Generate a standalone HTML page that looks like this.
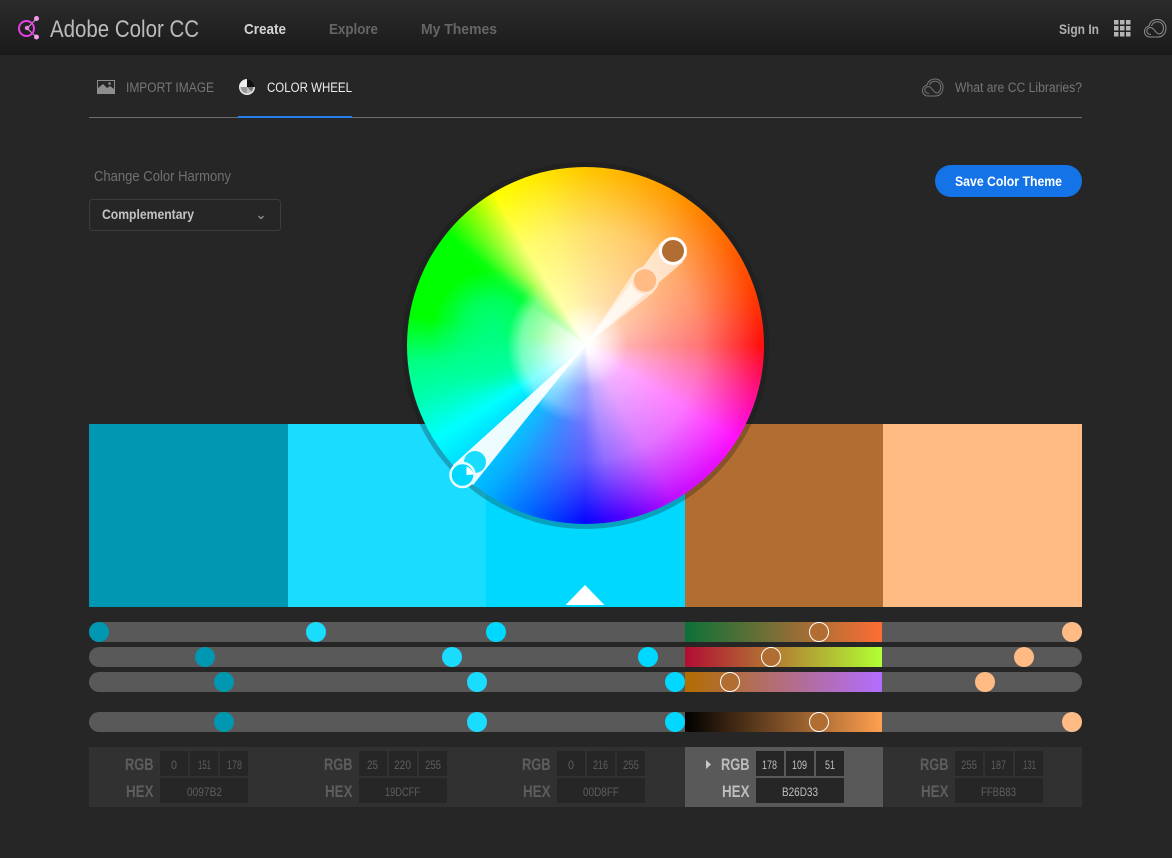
<!DOCTYPE html>
<html><head><meta charset="utf-8"><style>
html,body{margin:0;padding:0;background:#262626;width:1172px;height:858px;overflow:hidden}
div{position:absolute}
svg{position:absolute;left:0;top:0}
text{font-family:"Liberation Sans",sans-serif}
.w{-webkit-mask-image:conic-gradient(from 0deg,#000 0deg,#000 170deg,transparent 222deg,transparent 305deg,#000 328deg,#000 360deg);mask-image:conic-gradient(from 0deg,#000 0deg,#000 170deg,transparent 222deg,transparent 305deg,#000 328deg,#000 360deg)}
.v{-webkit-mask-image:conic-gradient(from 0deg,transparent 0deg,transparent 170deg,#000 222deg,#000 305deg,transparent 328deg,transparent 360deg);mask-image:conic-gradient(from 0deg,transparent 0deg,transparent 170deg,#000 222deg,#000 305deg,transparent 328deg,transparent 360deg)}
</style></head><body>
<div style="left:0;top:0;width:1172px;height:55px;background:linear-gradient(#2b2b2b,#1a1a1a)"></div>

<!-- swatches -->
<div style="left:89px;top:424px;width:199px;height:183px;background:#0097B2"></div>
<div style="left:288px;top:424px;width:198px;height:183px;background:#19DCFF"></div>
<div style="left:486px;top:424px;width:199px;height:183px;background:#00D8FF"></div>
<div style="left:685px;top:424px;width:198px;height:183px;background:#B26D33"></div>
<div style="left:883px;top:424px;width:199px;height:183px;background:#FFBB83"></div>

<!-- tracks -->
<div style="left:89px;top:622px;width:993px;height:20px;border-radius:10px;background:#595959"></div>
<div style="left:89px;top:647px;width:993px;height:20px;border-radius:10px;background:#595959"></div>
<div style="left:89px;top:672px;width:993px;height:20px;border-radius:10px;background:#595959"></div>
<div style="left:89px;top:712px;width:993px;height:20px;border-radius:10px;background:#595959"></div>
<div style="left:685px;top:622px;width:197px;height:20px;background:linear-gradient(90deg,#0c7038,#ff6d33)"></div>
<div style="left:685px;top:647px;width:197px;height:20px;background:linear-gradient(90deg,#b20d33,#b2ff33)"></div>
<div style="left:685px;top:672px;width:197px;height:20px;background:linear-gradient(90deg,#b26d00,#b26dff)"></div>
<div style="left:685px;top:712px;width:197px;height:20px;background:linear-gradient(90deg,#000,#ffa04f)"></div>

<!-- value panel -->
<div style="left:89px;top:747px;width:993px;height:60px;background:#313131"></div>
<div style="left:685px;top:747px;width:198px;height:60px;background:#595959"></div>

<!-- wheel -->
<div style="left:402px;top:162px;width:367px;height:367px;border-radius:50%;background:rgba(20,20,20,.28)"></div>
<div style="left:407px;top:167px;width:357px;height:357px;border-radius:50%;background:
radial-gradient(circle 62px at 24% 46%,rgba(0,255,150,.85) 0,rgba(0,255,150,.6) 50%,rgba(0,255,150,0) 100%),
conic-gradient(from 0deg,#ffc800 0deg,#ff9a00 30deg,#ff7000 50deg,#ff4000 72deg,#ff1010 90deg,#ff1080 104deg,#ff10ff 122deg,#c010ff 150deg,#5000ff 168deg,#0808ff 180deg,#0060ff 197deg,#00a8ff 212deg,#00e0ff 228deg,#00ffff 238deg,#00ffb0 252deg,#00ff80 265deg,#00ff00 280deg,#00ff00 309deg,#ffff00 329deg,#ffe800 345deg,#ffc800 360deg)"></div>
<div class="w" style="left:407px;top:167px;width:357px;height:357px;border-radius:50%;background:radial-gradient(circle closest-side at 50% 50%,rgba(255,255,255,1) 0,rgba(255,255,255,.86) 8%,rgba(255,255,255,.68) 22%,rgba(255,255,255,.57) 40%,rgba(255,255,255,.42) 65%,rgba(255,255,255,.17) 85%,rgba(255,255,255,0) 98%)"></div>
<div class="v" style="left:407px;top:167px;width:357px;height:357px;border-radius:50%;background:radial-gradient(circle closest-side at 50% 50%,rgba(255,255,255,1) 0,rgba(255,255,255,.9) 8%,rgba(255,255,255,.72) 22%,rgba(255,255,255,.46) 36%,rgba(255,255,255,0) 44%)"></div>
<div style="left:407px;top:167px;width:357px;height:357px;border-radius:50%;background:radial-gradient(circle closest-side at 50% 50%,rgba(255,255,255,.95) 0,rgba(255,255,255,.55) 7%,rgba(255,255,255,.25) 15%,rgba(255,255,255,0) 24%)"></div>

<svg width="1172" height="858" viewBox="0 0 1172 858">
  <!-- wheel beams and handles -->
  <polygon points="585.5,345 662,241 683,262" fill="#fff" fill-opacity=".62"/>
  <polygon points="585.5,345 634,272 654,292" fill="#fff" fill-opacity=".55"/>
  <polygon points="585.5,345 453,465 473,485" fill="#fff" fill-opacity=".93"/>
  <circle cx="645" cy="280.500" r="12.500" fill="#FFBB83" stroke="#ffe6d2" stroke-width="2.500"/>
  <circle cx="673" cy="251" r="12.500" fill="#B26D33" stroke="#fff" stroke-width="3"/>
  <circle cx="475" cy="462" r="11" fill="#19DCFF"/>
  <circle cx="462.500" cy="475" r="12" fill="#00D8FF" stroke="#e8fbff" stroke-width="2.500"/>
  <path d="M466.500 466.500a10 10 0 0 1 7 8l-7 .5z" fill="#fff"/>

  <!-- triangle -->
  <polygon points="585,585 604.500,605 565.500,605" fill="#fff"/>

  <!-- slider thumbs -->
  <g fill="#0097B2"><circle cx="99" cy="632" r="10"/><circle cx="205" cy="657" r="10"/><circle cx="224" cy="682" r="10"/><circle cx="224" cy="722" r="10"/></g>
  <g fill="#19DCFF"><circle cx="316" cy="632" r="10"/><circle cx="452" cy="657" r="10"/><circle cx="477" cy="682" r="10"/><circle cx="477" cy="722" r="10"/></g>
  <g fill="#00D8FF"><circle cx="496" cy="632" r="10"/><circle cx="648" cy="657" r="10"/><circle cx="675" cy="682" r="10"/><circle cx="675" cy="722" r="10"/></g>
  <g fill="#B26D33" stroke="#fff" stroke-width="1"><circle cx="819" cy="632" r="9.500"/><circle cx="771" cy="657" r="9.500"/><circle cx="730" cy="682" r="9.500"/><circle cx="819" cy="722" r="9.500"/></g>
  <g fill="#FFBB83"><circle cx="1072" cy="632" r="10"/><circle cx="1024" cy="657" r="10"/><circle cx="985" cy="682" r="10"/><circle cx="1072" cy="722" r="10"/></g>

  <!-- logo -->
  <path d="M27 28.500L36.500 18.500M27 28.500L36.500 37" stroke="#d9a0d6" stroke-width="1" fill="none"/>
  <circle cx="26.500" cy="28.500" r="7.500" stroke-width="2" stroke="#e63fe6" fill="none"/>
  <circle cx="27" cy="28" r="2.200" fill="#f07ae8"/>
  <circle cx="36.500" cy="18.500" r="2.500" fill="#f29ceb"/>
  <circle cx="36.500" cy="37" r="2.500" fill="#f29ceb"/>

  <!-- header text -->
  <text x="50" y="37" font-size="24" fill="#bbbbbb" textLength="149" lengthAdjust="spacingAndGlyphs">Adobe Color CC</text>
  <text x="244" y="34" font-size="15" font-weight="700" fill="#d4d4d4" textLength="42" lengthAdjust="spacingAndGlyphs">Create</text>
  <text x="329" y="34" font-size="15" font-weight="700" fill="#666" textLength="49" lengthAdjust="spacingAndGlyphs">Explore</text>
  <text x="421" y="34" font-size="15" font-weight="700" fill="#666" textLength="76" lengthAdjust="spacingAndGlyphs">My Themes</text>
  <text x="1059" y="34" font-size="14" font-weight="700" fill="#b0b0b0" textLength="40" lengthAdjust="spacingAndGlyphs">Sign In</text>
  <g fill="#b4b4b4">
    <rect x="1114" y="20" width="4.500" height="4.500"/><rect x="1120" y="20" width="4.500" height="4.500"/><rect x="1126" y="20" width="4.500" height="4.500"/>
    <rect x="1114" y="26" width="4.500" height="4.500"/><rect x="1120" y="26" width="4.500" height="4.500"/><rect x="1126" y="26" width="4.500" height="4.500"/>
    <rect x="1114" y="32" width="4.500" height="4.500"/><rect x="1120" y="32" width="4.500" height="4.500"/><rect x="1126" y="32" width="4.500" height="4.500"/>
  </g>
  <g fill="none" stroke="#8e8e8e" stroke-width="1">
    <path d="M1150 37C1146.500 37 1144.500 34.500 1144.500 31.500C1144.500 28.500 1146.500 26.500 1149 26C1150 22 1153 19.500 1157.500 19.500C1162.500 19.500 1166 23.500 1166 28C1166 33 1163 37 1158 37Z"/>
    <path d="M1151 34.500C1148.500 34.500 1146.800 33 1146.800 31C1146.800 29 1148.300 27.500 1150.500 27.500C1154 27.500 1156 34 1159 34C1161.500 34 1163.500 31.500 1163.500 28C1163.500 24.500 1161 21.800 1157.500 21.800C1154.500 21.800 1152.500 23.500 1151.500 26"/>
  </g>

  <!-- tabs -->
  <rect x="97" y="80" width="18" height="14" fill="#8d8d8d"/>
  <path d="M98 81h16v8l-4-3-3 2-4-4-5 4z" fill="#262626"/>
  <circle cx="109.500" cy="83.500" r="1.300" fill="#8d8d8d"/>
  <text x="126" y="92" font-size="13.500" fill="#767676" textLength="88" lengthAdjust="spacingAndGlyphs">IMPORT IMAGE</text>
  <circle cx="247" cy="87" r="8" fill="#eee"/>
  <path d="M247 87V79a8 8 0 0 1 8 8z" fill="#111"/>
  <path d="M247 87h6.500a6.500 6.500 0 0 1-2 4.700z" fill="#777"/>
  <path d="M247 87l4.500 4.700a6.500 6.500 0 0 1-4.500 1.800z" fill="#bbb"/>
  <path d="M247 87v6.500a6.500 6.500 0 0 1-6.500-6.500z" fill="#999"/>
  <text x="267" y="92" font-size="13.500" fill="#ededed" textLength="85" lengthAdjust="spacingAndGlyphs">COLOR WHEEL</text>
  <g fill="none" stroke="#757575" stroke-width="1">
    <path d="M928 96C924.500 96 922.500 93.500 922.500 90.500C922.500 87.500 924.500 85.500 927 85C928 81.500 931 79 935 79C939.800 79 943 82.800 943 87C943 92 940 96 935.500 96Z"/>
    <path d="M929 93.500C926.500 93.500 924.800 92 924.800 90C924.800 88 926.300 86.500 928.500 86.500C932 86.500 933.500 93 936.500 93C939 93 940.700 90.500 940.700 87C940.700 83.700 938.300 81.200 935 81.200C932.300 81.200 930.300 82.800 929.500 85"/>
  </g>
  <text x="955" y="92" font-size="13.500" fill="#767676" textLength="127" lengthAdjust="spacingAndGlyphs">What are CC Libraries?</text>
  <rect x="89" y="117" width="993" height="1" fill="#6e6e6e"/>
  <rect x="238" y="116" width="114" height="2" fill="#2680eb"/>

  <!-- harmony -->
  <text x="94" y="181" font-size="14.500" fill="#707070" textLength="137" lengthAdjust="spacingAndGlyphs">Change Color Harmony</text>
  <rect x="89.500" y="199.500" width="191" height="31" rx="3" fill="none" stroke="#3d3d3d"/>
  <text x="102" y="219" font-size="13.500" font-weight="700" fill="#c4c4c4" textLength="92" lengthAdjust="spacingAndGlyphs">Complementary</text>
  <path d="M258.500 216l2.500 2.500 2.500-2.500" fill="none" stroke="#aaa" stroke-width="1"/>

  <!-- save -->
  <rect x="935" y="165" width="147" height="32" rx="16" fill="#1473e6"/>
  <text x="955" y="186" font-size="13.500" font-weight="700" fill="#fff" textLength="107" lengthAdjust="spacingAndGlyphs">Save Color Theme</text>

  <!-- value boxes -->
  <g fill="#262626">
    <rect x="160" y="751" width="28" height="25"/><rect x="190" y="751" width="28" height="25"/><rect x="220" y="751" width="28" height="25"/><rect x="160" y="778" width="88" height="25"/>
    <rect x="359" y="751" width="28" height="25"/><rect x="389" y="751" width="28" height="25"/><rect x="419" y="751" width="28" height="25"/><rect x="359" y="778" width="88" height="25"/>
    <rect x="557" y="751" width="28" height="25"/><rect x="587" y="751" width="28" height="25"/><rect x="617" y="751" width="28" height="25"/><rect x="557" y="778" width="88" height="25"/>
    <rect x="756" y="751" width="28" height="25"/><rect x="786" y="751" width="28" height="25"/><rect x="816" y="751" width="28" height="25"/><rect x="756" y="778" width="88" height="25"/>
    <rect x="955" y="751" width="28" height="25"/><rect x="985" y="751" width="28" height="25"/><rect x="1015" y="751" width="28" height="25"/><rect x="955" y="778" width="88" height="25"/>
  </g>

  <g font-size="16.500" font-weight="700" fill="#5e5e5e">
    <text x="125" y="770" textLength="28.500" lengthAdjust="spacingAndGlyphs">RGB</text><text x="126" y="797" textLength="27.500" lengthAdjust="spacingAndGlyphs">HEX</text>
    <text x="324" y="770" textLength="28.500" lengthAdjust="spacingAndGlyphs">RGB</text><text x="325" y="797" textLength="27.500" lengthAdjust="spacingAndGlyphs">HEX</text>
    <text x="522" y="770" textLength="28.500" lengthAdjust="spacingAndGlyphs">RGB</text><text x="523" y="797" textLength="27.500" lengthAdjust="spacingAndGlyphs">HEX</text>
    <text x="721" y="770" textLength="28.500" lengthAdjust="spacingAndGlyphs" fill="#bdbdbd">RGB</text><text x="722" y="797" textLength="27.500" lengthAdjust="spacingAndGlyphs" fill="#bdbdbd">HEX</text>
    <text x="920" y="770" textLength="28.500" lengthAdjust="spacingAndGlyphs">RGB</text><text x="921" y="797" textLength="27.500" lengthAdjust="spacingAndGlyphs">HEX</text>
  </g>
  <polygon points="706,760 711,764.500 706,769" fill="#c8c8c8"/>

  <g font-size="12" fill="#5e5e5e">
    <text x="171" y="769" textLength="6" lengthAdjust="spacingAndGlyphs">0</text><text x="198" y="769" textLength="13" lengthAdjust="spacingAndGlyphs">151</text><text x="227" y="769" textLength="15" lengthAdjust="spacingAndGlyphs">178</text><text x="187" y="796" textLength="35" lengthAdjust="spacingAndGlyphs">0097B2</text>
    <text x="367" y="769" textLength="11" lengthAdjust="spacingAndGlyphs">25</text><text x="394" y="769" textLength="17" lengthAdjust="spacingAndGlyphs">220</text><text x="425" y="769" textLength="16" lengthAdjust="spacingAndGlyphs">255</text><text x="385" y="796" textLength="35" lengthAdjust="spacingAndGlyphs">19DCFF</text>
    <text x="568" y="769" textLength="6" lengthAdjust="spacingAndGlyphs">0</text><text x="593" y="769" textLength="15" lengthAdjust="spacingAndGlyphs">216</text><text x="623" y="769" textLength="16" lengthAdjust="spacingAndGlyphs">255</text><text x="583" y="796" textLength="36" lengthAdjust="spacingAndGlyphs">00D8FF</text>
    <g fill="#c0c0c0"><text x="762" y="769" textLength="15" lengthAdjust="spacingAndGlyphs">178</text><text x="792" y="769" textLength="15" lengthAdjust="spacingAndGlyphs">109</text><text x="825" y="769" textLength="10" lengthAdjust="spacingAndGlyphs">51</text><text x="782" y="796" textLength="36" lengthAdjust="spacingAndGlyphs">B26D33</text></g>
    <text x="961" y="769" textLength="16" lengthAdjust="spacingAndGlyphs">255</text><text x="991" y="769" textLength="15" lengthAdjust="spacingAndGlyphs">187</text><text x="1023" y="769" textLength="13" lengthAdjust="spacingAndGlyphs">131</text><text x="981" y="796" textLength="35" lengthAdjust="spacingAndGlyphs">FFBB83</text>
  </g>
</svg>
</body></html>
